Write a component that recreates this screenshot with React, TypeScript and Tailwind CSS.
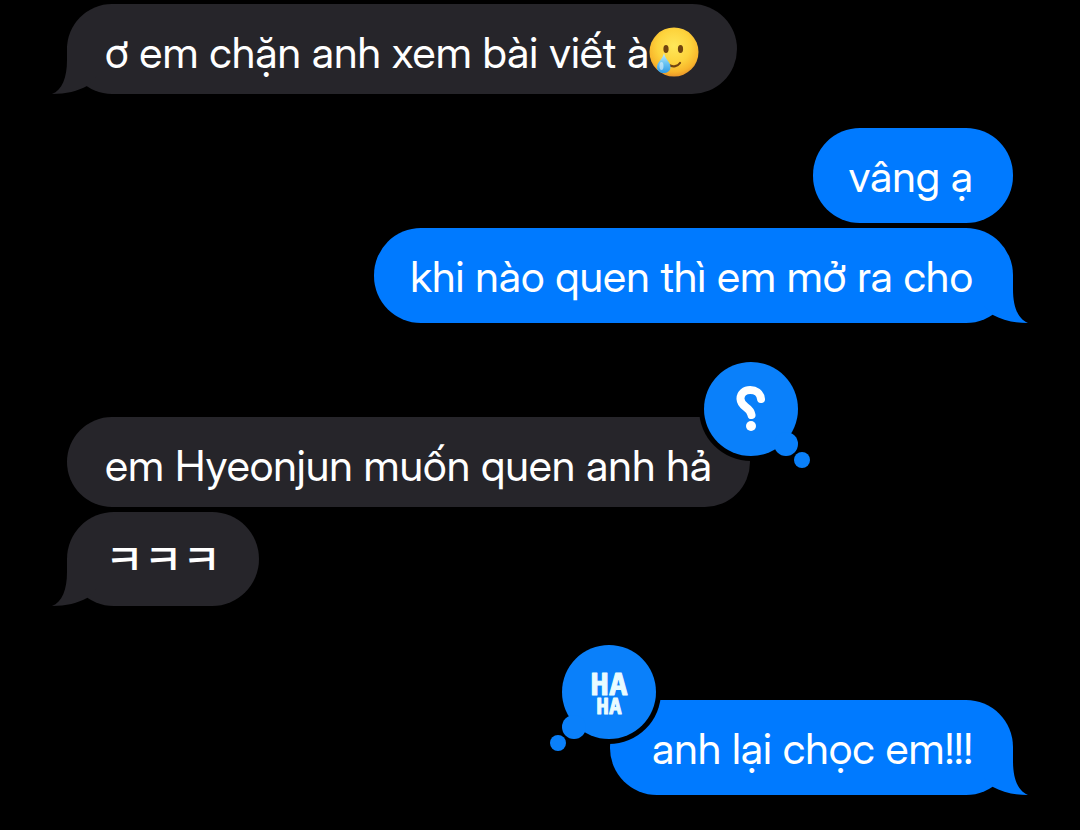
import { ReactNode } from "react";
import clsx from "clsx";

type Reaction = "question" | "haha";

type Message = {
  text: string;
  lang?: string;
  emoji?: boolean;
  tail?: boolean;
  reaction?: Reaction;
};

type Group = {
  from: "them" | "me";
  spacing: string;
  messages: Message[];
};

const groups: Group[] = [
  {
    from: "them",
    spacing: "",
    messages: [{ text: "ơ em chặn anh xem bài viết à", emoji: true, tail: true }],
  },
  {
    from: "me",
    spacing: "mt-[34px]",
    messages: [{ text: "vâng ạ" }, { text: "khi nào quen thì em mở ra cho", tail: true }],
  },
  {
    from: "them",
    spacing: "mt-[94px]",
    messages: [
      { text: "em Hyeonjun muốn quen anh hả", reaction: "question" },
      { text: "ㅋㅋㅋ", lang: "ko", tail: true },
    ],
  },
  {
    from: "me",
    spacing: "mt-[94px]",
    messages: [{ text: "anh lại chọc em!!!", tail: true, reaction: "haha" }],
  },
];

export default function App() {
  return (
    <main
      lang="vi"
      className="min-h-screen overflow-x-hidden bg-black px-[67px] pt-1 pb-8 font-['Inter_Display','Inter','Noto_Sans_CJK_KR',sans-serif] text-[43px] leading-[60px] text-white"
    >
      {groups.map((group, i) => (
        <ol
          key={i}
          className={clsx(
            "flex flex-col gap-[5px]",
            group.spacing,
            group.from === "me" ? "items-end" : "items-start"
          )}
        >
          {group.messages.map((message) => (
            <Bubble key={message.text} message={message} mine={group.from === "me"} />
          ))}
        </ol>
      ))}
    </main>
  );
}

const Bubble = ({ message, mine }: { message: Message; mine: boolean }) => {
  const { text, lang, emoji, tail, reaction } = message;
  return (
    <li
      className={clsx(
        "relative flex items-center rounded-[47px] pt-[18px]",
        mine ? "bg-[#007aff] pr-10 pb-[17px]" : "bg-[#26252a] px-[38px]",
        mine && (reaction ? "pl-[42px]" : "pl-9"),
        !mine && (lang === "ko" ? "pb-4 text-[42px] font-medium" : "pb-3")
      )}
    >
      {tail && <Tail mine={mine} />}
      <span lang={lang} className="relative">{text}</span>
      {emoji && <TearfulSmile />}
      {reaction === "question" && (
        <Tapback side="right" label="Question">
          <path
            d="M62 42 C61 30 41 30 41.500 42 C42 51 51 49 52.500 58"
            fill="none"
            stroke="#fff"
            strokeWidth="8"
            strokeLinecap="round"
          />
          <circle cx="52" cy="69" r="5" fill="#fff" />
        </Tapback>
      )}
      {reaction === "haha" && (
        <Tapback side="left" label="Haha">
          <text
            textAnchor="middle"
            fontWeight="bold"
            fontFamily="'DejaVu Sans Mono', monospace"
            fill="#e9fbff"
            stroke="#e9fbff"
            strokeLinejoin="round"
          >
            <tspan x="64" y="55" fontSize="31">HA</tspan>
            <tspan x="64" y="74" fontSize="21">HA</tspan>
          </text>
        </Tapback>
      )}
    </li>
  );
};

const Tail = ({ mine }: { mine: boolean }) => (
  <svg
    viewBox="0 0 46 48"
    aria-hidden="true"
    className={clsx(
      "absolute bottom-0 h-12 w-[46px]",
      mine ? "-right-4 -scale-x-100 text-[#007aff]" : "-left-4 text-[#26252a]"
    )}
  >
    <path d="M16 0 V14 C16 32 11 44 1 48 C15 48 27 45 36 40 L46 30 V0 Z" fill="currentColor" />
  </svg>
);

// Thought-bubble badge that hangs off the top corner of a message
const Tapback = ({ side, label, children }: { side: "left" | "right"; label: string; children: ReactNode }) => {
  const right = side === "right";
  const dots = [
    { cx: right ? 52 : 64, cy: 52, r: 47 },
    { cx: right ? 87 : 29, cy: 87, r: 12 },
    { cx: right ? 103 : 13, cy: 103, r: 8 },
  ];
  return (
    <svg
      viewBox="0 0 116 116"
      role="img"
      aria-label={label}
      className={clsx("absolute -top-[60px] size-[116px]", right ? "-right-[65px]" : "-left-[65px]")}
    >
      {dots.map((dot) => (
        <circle key={dot.r} cx={dot.cx} cy={dot.cy} r={dot.r + 5} fill="#000" />
      ))}
      {dots.map((dot) => (
        <circle key={dot.r} cx={dot.cx} cy={dot.cy} r={dot.r} fill="#0a80fa" />
      ))}
      {children}
    </svg>
  );
};

const TearfulSmile = () => (
  <svg viewBox="0 0 50 50" role="img" aria-label="Smiling face with tear" className="size-[50px]">
    <defs>
      <radialGradient id="face" cx="50%" cy="38%" r="62%">
        <stop offset="0" stopColor="#ffe75a" />
        <stop offset="0.55" stopColor="#fdd33c" />
        <stop offset="0.85" stopColor="#f8b62c" />
        <stop offset="1" stopColor="#e9962a" />
      </radialGradient>
      <linearGradient id="tear" x1="0" y1="0" x2="0" y2="1">
        <stop offset="0" stopColor="#c9eefb" />
        <stop offset="0.5" stopColor="#6cc5f3" />
        <stop offset="1" stopColor="#2f9be6" />
      </linearGradient>
    </defs>
    <circle cx="25" cy="25" r="24.500" fill="url(#face)" />
    <ellipse cx="17" cy="22" rx="2.600" ry="4" fill="#70430f" />
    <ellipse cx="31.500" cy="22" rx="2.600" ry="4" fill="#70430f" />
    <path d="M20 38 C24 40.500 29 39 31 36" fill="none" stroke="#70430f" strokeWidth="2.200" strokeLinecap="round" />
    <path d="M15 26 C16 32 21.500 35 21.500 40 C21.500 48 8 48 8 40 C8 35 14 32 15 26 Z" fill="url(#tear)" />
    <ellipse cx="12.500" cy="39" rx="2" ry="4" fill="#fff" opacity="0.5" />
  </svg>
);
